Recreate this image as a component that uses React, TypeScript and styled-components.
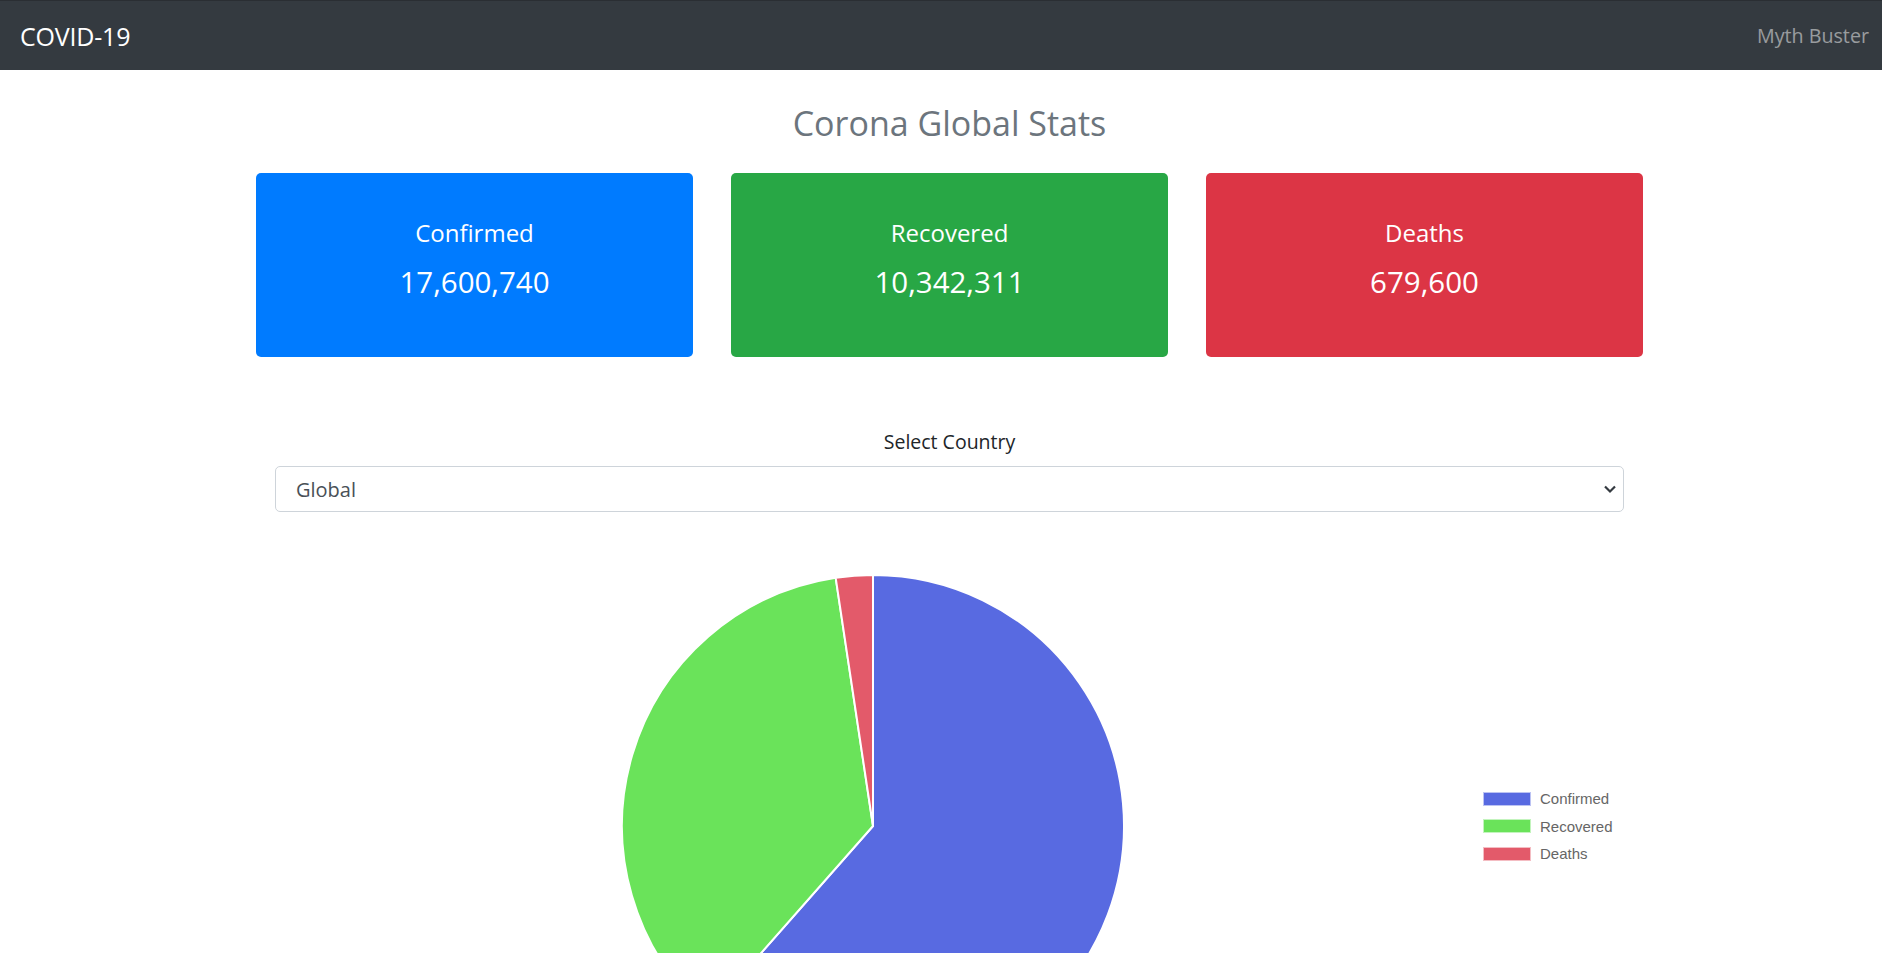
import React from 'react';
import styled, { createGlobalStyle } from 'styled-components';

const GlobalStyle = createGlobalStyle`
  html, body {
    margin: 0;
    padding: 0;
    overflow: hidden;
    background: #fff;
    font-family: 'Open Sans', 'Noto Sans', sans-serif;
    color: #212529;
  }
`;

const Navbar = styled.nav`
  height: 70px;
  box-sizing: border-box;
  border-top: 1px solid #2a2e33;
  background: #343a40;
  display: flex;
  align-items: center;
  justify-content: space-between;
  padding: 0 13px 0 20px;
`;

const Brand = styled.a`
  color: #fff;
  font-size: 25px;
  letter-spacing: -0.2px;
`;

const NavLink = styled.a`
  color: rgba(255, 255, 255, 0.5);
  font-size: 19.7px;
`;

const Main = styled.main`
  padding-left: 17px;
  display: flex;
  flex-direction: column;
  align-items: center;
`;

const Title = styled.h1`
  margin: 33px 0 0;
  font-size: 34px;
  font-weight: 400;
  line-height: 1.2;
  color: #6c757d;
`;

const CardRow = styled.section`
  display: grid;
  grid-template-columns: repeat(3, 437px);
  gap: 38px;
  margin-top: 29px;
`;

const StatCard = styled.div<{ $bg: string }>`
  height: 184px;
  border-radius: 5px;
  background: ${(p) => p.$bg};
  color: #fff;
  display: flex;
  flex-direction: column;
  align-items: center;
  justify-content: center;
  padding-bottom: 11px;
  box-sizing: border-box;
`;

const CardLabel = styled.div`
  font-size: 24px;
  line-height: 1.2;
`;

const CardValue = styled.div`
  font-size: 29.5px;
  line-height: 1.2;
  margin-top: 16px;
`;

const FieldLabel = styled.label`
  margin-top: 70px;
  font-size: 19.5px;
  line-height: 1.5;
`;

const SelectWrap = styled.div`
  position: relative;
  width: 1349px;
  margin-top: 10px;
`;

const Select = styled.select`
  appearance: none;
  width: 100%;
  height: 46px;
  border: 1px solid #ced4da;
  border-radius: 5px;
  background: #fff;
  padding: 0 20px;
  font-family: inherit;
  font-size: 20px;
  color: #495057;
  outline: none;
`;

const Chevron = styled.svg`
  position: absolute;
  right: 7px;
  top: 17px;
  pointer-events: none;
`;

const ChartRow = styled.section`
  display: flex;
  align-items: center;
  width: 1349px;
  margin-top: 47px;
`;

const Legend = styled.ul`
  list-style: none;
  margin: 0;
  padding: 0 0 0 10px;
  display: flex;
  flex-direction: column;
  gap: 10px;
`;

const LegendItem = styled.li`
  display: flex;
  align-items: center;
  gap: 9px;
  font-family: 'Liberation Sans', Arial, sans-serif;
  font-size: 15px;
  color: #666;
  height: 17.5px;
`;

const Swatch = styled.span<{ $color: string }>`
  width: 46px;
  height: 12px;
  background: ${(p) => p.$color};
  border: 1px solid rgba(255, 255, 255, 0.6);
`;

const stats = [
  { label: 'Confirmed', value: 17600740, card: '#007bff', slice: '#586ae1' },
  { label: 'Recovered', value: 10342311, card: '#28a745', slice: '#6ae35a' },
  { label: 'Deaths', value: 679600, card: '#dc3545', slice: '#e35a6a' },
];

const CX = 598;
const CY = 267;
const R = 251;

function slicePath(start: number, end: number) {
  const a0 = start - Math.PI / 2;
  const a1 = end - Math.PI / 2;
  const x0 = CX + R * Math.cos(a0);
  const y0 = CY + R * Math.sin(a0);
  const x1 = CX + R * Math.cos(a1);
  const y1 = CY + R * Math.sin(a1);
  const large = end - start > Math.PI ? 1 : 0;
  return `M${CX},${CY} L${x0},${y0} A${R},${R} 0 ${large} 1 ${x1},${y1} Z`;
}

const PieChart: React.FC = () => {
  const total = stats.reduce((s, d) => s + d.value, 0);
  let acc = 0;
  return (
    <svg width={1198} height={CY * 2} viewBox={`0 0 1198 ${CY * 2}`}>
      {stats.map((d) => {
        const start = acc;
        acc += (d.value / total) * Math.PI * 2;
        return (
          <path
            key={d.label}
            d={slicePath(start, acc)}
            fill={d.slice}
            stroke="#fff"
            strokeWidth={2}
            strokeLinejoin="round"
          />
        );
      })}
    </svg>
  );
};

export default function App() {
  return (
    <>
      <GlobalStyle />
      <Navbar>
        <Brand>COVID-19</Brand>
        <NavLink>Myth Buster</NavLink>
      </Navbar>
      <Main>
        <Title>Corona Global Stats</Title>
        <CardRow>
          {stats.map((d) => (
            <StatCard key={d.label} $bg={d.card}>
              <CardLabel>{d.label}</CardLabel>
              <CardValue>{d.value.toLocaleString('en-US')}</CardValue>
            </StatCard>
          ))}
        </CardRow>
        <FieldLabel htmlFor="country">Select Country</FieldLabel>
        <SelectWrap>
          <Select id="country" defaultValue="Global">
            <option>Global</option>
          </Select>
          <Chevron width="14" height="12" viewBox="0 0 14 12">
            <path d="M2 3.5 L7 8.5 L12 3.5" fill="none" stroke="#343a40" strokeWidth="2.2" />
          </Chevron>
        </SelectWrap>
        <ChartRow>
          <PieChart />
          <Legend>
            {stats.map((d) => (
              <LegendItem key={d.label}>
                <Swatch $color={d.slice} />
                {d.label}
              </LegendItem>
            ))}
          </Legend>
        </ChartRow>
      </Main>
    </>
  );
}
